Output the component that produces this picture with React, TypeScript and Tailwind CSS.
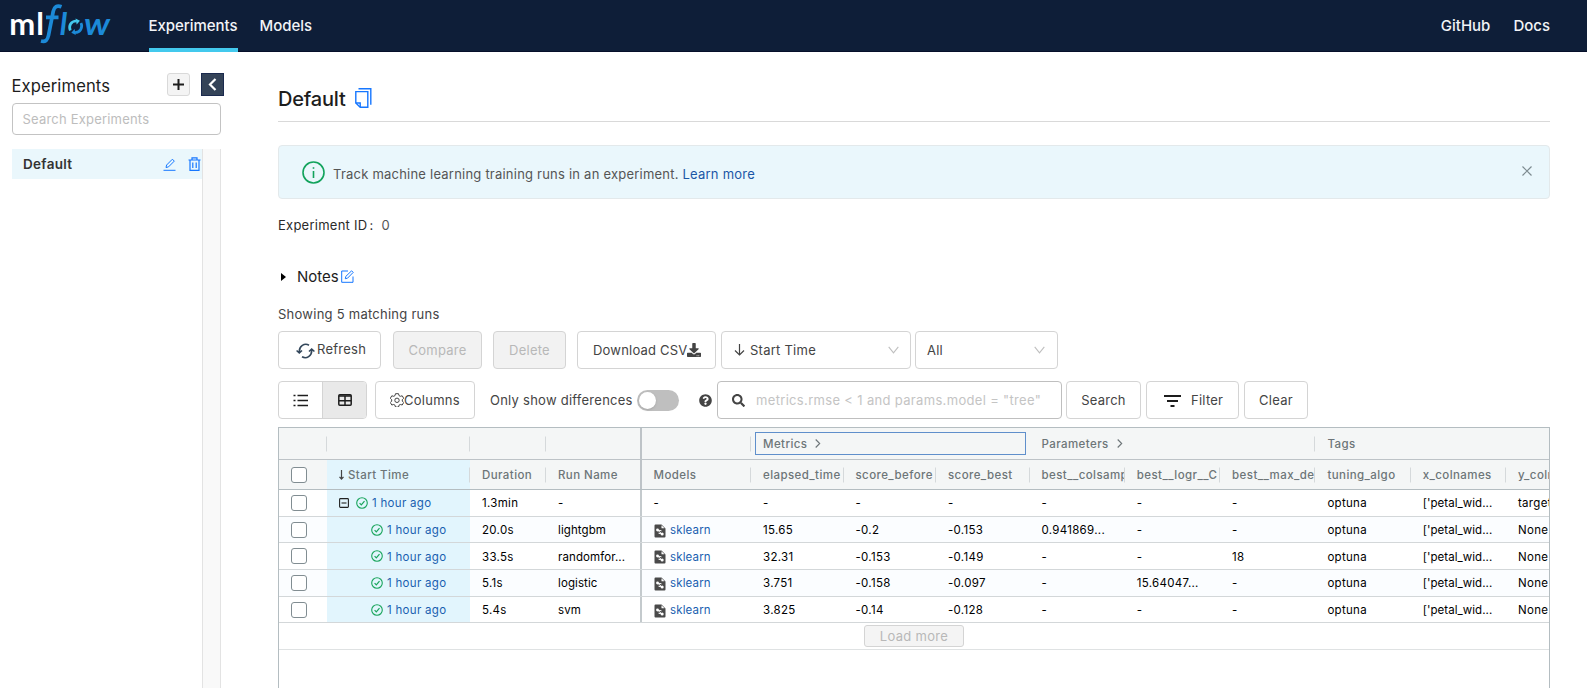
import React from 'react';
import { FaDownload, FaQuestionCircle, FaSearch } from 'react-icons/fa';

const COLS = 'grid-cols-[48px_143px_76px_95.5px_109.5px_92.5px_92.5px_93.5px_95.3px_95.3px_95.3px_95.3px_95.3px_95.3px]';

const headers = [
  'Duration',
  'Run Name',
  'Models',
  'elapsed_time',
  'score_before',
  'score_best',
  'best__colsamp',
  'best__logr__C',
  'best__max_de',
  'tuning_algo',
  'x_colnames',
  'y_coln',
];

interface Run {
  parent?: boolean;
  duration: string;
  name: string;
  model: string;
  values: string[];
}

const runs: Run[] = [
  { parent: true, duration: '1.3min', name: '-', model: '-', values: ['-', '-', '-', '-', '-', '-', 'optuna', "['petal_wid...", 'target'] },
  { duration: '20.0s', name: 'lightgbm', model: 'sklearn', values: ['15.65', '-0.2', '-0.153', '0.941869...', '-', '-', 'optuna', "['petal_wid...", 'None'] },
  { duration: '33.5s', name: 'randomfor...', model: 'sklearn', values: ['32.31', '-0.153', '-0.149', '-', '-', '18', 'optuna', "['petal_wid...", 'None'] },
  { duration: '5.1s', name: 'logistic', model: 'sklearn', values: ['3.751', '-0.158', '-0.097', '-', '15.64047...', '-', 'optuna', "['petal_wid...", 'None'] },
  { duration: '5.4s', name: 'svm', model: 'sklearn', values: ['3.825', '-0.14', '-0.128', '-', '-', '-', 'optuna', "['petal_wid...", 'None'] },
];

const Logo = () => (
  <svg width="112" height="50" viewBox="0 0 112 50" className="shrink-0 font-['Lato',sans-serif]">
    <text x="9.3" y="34.5" fontSize="31" fontWeight="700" fill="#fff">m</text>
    <text x="36.3" y="34.5" fontSize="31" fontWeight="700" fill="#fff">l</text>
    <path d="M61.500 6.800c-4.500-1.800-7.300 0-8.300 4.700L48.500 35.500c-1 4.700-3 6.700-7.500 5.500M46 17.300h12.500" fill="none" stroke="#1c8ad8" strokeWidth="3.700" />
    <text x="59.8" y="34.5" fontSize="31" fontWeight="700" fontStyle="italic" fill="#1c8ad8">l</text>
    <g fill="none" strokeWidth="2.700">
      <path d="M70.300 30.500c-2-4.500 .7-9.500 6-9.500" stroke="#43c9ed" />
      <path d="M81 23c2 4.500-.7 9.500-6 9.500" stroke="#1c8ad8" />
    </g>
    <path d="M75.500 18.500l4.500 2.300-3.300 3.700z" fill="#43c9ed" />
    <path d="M75.800 35l-4.500-2.300 3.300-3.700z" fill="#1c8ad8" />
    <text x="84" y="34.5" fontSize="31" fontWeight="700" fontStyle="italic" fill="#1c8ad8" textLength="26" lengthAdjust="spacingAndGlyphs">w</text>
  </svg>
);

const CheckCircle = () => (
  <svg width="12" height="12" viewBox="0 0 12 12" fill="none" stroke="#1aa55c" className="shrink-0">
    <circle cx="6" cy="6" r="5.300" strokeWidth="1.100" />
    <path d="M3.600 6.200l1.700 1.700 3.200-3.800" strokeWidth="1.200" />
  </svg>
);

const ModelIcon = () => (
  <svg width="12" height="14" viewBox="0 0 12 14" className="ml-[0.5px] shrink-0">
    <path d="M1.500 .5h6l4 4v8a1 1 0 0 1-1 1h-9a1 1 0 0 1-1-1v-11a1 1 0 0 1 1-1z" fill="#4a4a4a" />
    <path d="M7.500 1.300v3h3z" fill="#fff" />
    <path d="M3.500 6L8 10M3.500 6l4 .8M8 10l-3.500-.8" stroke="#fff" />
    <circle cx="3.500" cy="6" r="1.400" fill="#fff" />
    <circle cx="8.200" cy="10" r="1.500" fill="#fff" />
  </svg>
);

const Checkbox = () => <span className="block h-4 w-4 rounded-[3px] border-[1.5px] border-[#818d92] bg-white" />;

const Chevron = () => (
  <svg width="11" height="8" viewBox="0 0 11 8" fill="none" stroke="#bfbfbf" strokeWidth="1.100">
    <path d="M.7 .8l4.800 6 4.800-6" />
  </svg>
);

const GroupArrow = () => (
  <svg width="6" height="9" viewBox="0 0 6 9" fill="none" stroke="#6d7578" strokeWidth="1.100" className="mb-[2px] ml-[8px]">
    <path d="M.7 .5l4 4-4 4" />
  </svg>
);

const Tick = () => <span className="absolute right-0 top-1/2 h-[15px] w-px -translate-y-1/2 bg-[#d5d9db]" />;

const btn = 'flex h-[38px] shrink-0 items-center whitespace-nowrap rounded border border-[#d4d4d4] bg-white text-[13px] tracking-[0.25px] text-[#444]';

function Sidebar() {
  return (
    <aside className="flex w-[224px] shrink-0 flex-col pl-[11.5px]">
      <div className="mt-[21px] flex h-[23px] items-center">
        <span className="w-[155.5px] pt-[3px] text-[16.6px] tracking-[0.1px] text-[#1d1d1d]">Experiments</span>
        <button className="flex h-[23px] w-[23px] items-center justify-center rounded-[3px] border border-[#d9d9d9] bg-[#f4f4f4]">
          <svg width="11" height="11" viewBox="0 0 11 11" stroke="#1d1d1d" strokeWidth="2"><path d="M5.500 0v11M0 5.500h11" /></svg>
        </button>
        <button className="ml-auto flex h-[23px] w-[23px] items-center justify-center border border-[#1b2a4e] bg-[#344358]">
          <svg width="9" height="13" viewBox="0 0 9 13" fill="none" stroke="#fff" strokeWidth="2.200"><path d="M7.500 1L2 6.500 7.500 12" /></svg>
        </button>
      </div>
      <div className="mt-[7px] flex h-[32px] w-[209.500px] items-center rounded border border-[#c3c3c3] px-[10px] pt-[2px] text-[13px] tracking-[0.2px] text-[#bdbdbd]">
        Search Experiments
      </div>
      <div className="mt-[14px] flex w-[209.500px] flex-1">
        <div className="flex-1">
          <div className="flex h-[30px] items-center bg-[#eaf7fc] pl-[11.500px]">
            <span className="pt-px text-[13.5px] font-semibold tracking-[0.3px] text-[#333]">Default</span>
            <svg width="13" height="13" viewBox="0 0 13 13" fill="none" stroke="#1677ff" className="ml-auto">
              <path d="M.5 12.300h12M3 9.500l.6-2.500L9.400 1.200l1.900 1.900L5.500 8.900z" />
            </svg>
            <svg width="13" height="14" viewBox="0 0 13 14" fill="none" stroke="#1677ff" strokeWidth="1.200" className="ml-3 mr-px">
              <path d="M.5 3h12M4 3V.8h5V3M2 3v10.300h9V3M4.800 5.500v5.500M8.200 5.500v5.500" />
            </svg>
          </div>
        </div>
        <div className="w-[19px] border-x border-[#e3e3e3] bg-[#f9f9f9]" />
      </div>
    </aside>
  );
}

function Toolbar() {
  return (
    <>
      <div className="mt-[6px] flex">
        <button className={`${btn} w-[103px] pl-[17px]`}>
          <svg width="19" height="16" viewBox="0 0 19 16" fill="none" stroke="#33475b" strokeWidth="1.600" className="mt-px">
            <path d="M13 2.200C8.500-.3 3 3 3.300 9M.6 7.500l2.700 2.500 2.700-2.500" />
            <path d="M6 13.800c4.500 2.500 10-.8 9.700-6.800M18.400 8.500L15.700 6 13 8.500" />
          </svg>
          <span className="ml-[2px]">Refresh</span>
        </button>
        <button className={`${btn} ml-3 w-[89px] justify-center bg-[#f2f2f2]! pt-[2px] text-[#b8b8b8]!`}>Compare</button>
        <button className={`${btn} ml-[11px] w-[73px] justify-center bg-[#f2f2f2]! pt-[2px] text-[#b8b8b8]!`}>Delete</button>
        <button className={`${btn} ml-[11px] w-[139px] pl-[15px] pt-[2px]`}>
          <span className="tracking-[0.2px]">Download CSV</span><FaDownload size={14} className="mb-[2px]" />
        </button>
        <div className={`${btn} ml-[5px] w-[190px] pl-3 pr-[11px]`}>
          <svg width="11" height="12" viewBox="0 0 11 12" fill="none" stroke="#444" strokeWidth="1.200"><path d="M5.500 0v11M1 6.500L5.500 11 10 6.500" /></svg>
          <span className="ml-[5px] mr-auto pt-[2px]">Start Time</span>
          <Chevron />
        </div>
        <div className={`${btn} ml-[4px] w-[143px] justify-between pl-[11px] pr-3`}><span className="pt-[2px]">All</span><Chevron /></div>
      </div>

      <div className="mt-[12px] flex items-center">
        <div className={`${btn} w-[89px] overflow-hidden`}>
          <span className="flex h-full w-[43px] items-center justify-center">
            <svg width="15" height="13" viewBox="0 0 15 13" stroke="#1d1d1d" strokeWidth="1.500">
              <path d="M4.500 1.500H15M4.500 6.500H15M4.500 11.500H15M.5 1.500h2M.5 6.500h2M.5 11.500h2" />
            </svg>
          </span>
          <span className="flex h-full flex-1 items-center justify-center border-l border-[#d4d4d4] bg-[#e9e9e9]">
            <svg width="14" height="12" viewBox="0 0 14 12" fill="none" stroke="#1d1d1d" strokeWidth="1.500">
              <rect x=".8" y=".8" width="12.400" height="10.400" rx="1" />
              <path d="M1 2h12M1 6.800h12M7 2v9" />
            </svg>
          </span>
        </div>
        <button className={`${btn} ml-[8px] w-[100px] pl-[14px]`}>
          <svg width="14" height="14" viewBox="0 0 14 14" fill="none" stroke="#444" strokeWidth="1">
            <path d="M5.500 .7h3l.5 1.900 1.300.7 1.900-.5 1.500 2.500-1.400 1.400v1.400l1.400 1.400-1.500 2.500-1.900-.5-1.300.7-.5 1.900h-3L5 12.200l-1.300-.7-1.900.5L.3 9.500l1.400-1.400V6.700L.3 5.300l1.500-2.500 1.900.5L5 2.600z" />
            <circle cx="7" cy="7.300" r="2.200" />
          </svg>
          <span className="pt-px">Columns</span>
        </button>
        <span className="ml-[15px] w-[147px] shrink-0 whitespace-nowrap pt-px text-[13px] tracking-[0.25px] text-[#444]">Only show differences</span>
        <span className="flex h-[21px] w-[42px] shrink-0 items-center rounded-full bg-[#bfbfbf] px-[2px]">
          <span className="h-[17px] w-[17px] rounded-full bg-white shadow" />
        </span>
        <FaQuestionCircle size={13} className="ml-[20px] shrink-0 text-[#444]" />
        <div className={`${btn} ml-[5px] w-[345px] border-[#bfbfbf]! pl-[14px]`}>
          <FaSearch size={13} />
          <span className="ml-[11px] pt-px tracking-[0.33px] text-[#c4c4c4]">metrics.rmse &lt; 1 and params.model = "tree"</span>
        </div>
        <button className={`${btn} ml-[4px] w-[75px] justify-center pt-px`}>Search</button>
        <button className={`${btn} ml-[5px] w-[93px] pl-[17px] pt-px`}>
          <svg width="17" height="12" viewBox="0 0 17 12" stroke="#1d1d1d" strokeWidth="1.800"><path d="M0 1h17M3 6h11M6.500 11h4" /></svg>
          <span className="ml-[10px]">Filter</span>
        </button>
        <button className={`${btn} ml-[5px] w-[64px] justify-center pt-px`}>Clear</button>
      </div>
    </>
  );
}

function RunsTable() {
  return (
    <div className="mt-2 flex-1 overflow-hidden border border-b-0 border-[#b4bdc1] text-[11.5px]">
      <div className={`grid ${COLS} h-[32px] items-center border-b border-[#bdc3c7] bg-[#f4f6f6] font-medium tracking-[0.42px] text-[#6d7578]`}>
        <div className="relative h-full"><Tick /></div>
        <div className="relative h-full"><Tick /></div>
        <div className="relative h-full"><Tick /></div>
        <div className="h-full border-r-2 border-[#bdc3c7]" />
        <div className="relative h-full"><Tick /></div>
        <div className="col-span-3 ml-1 mr-[4px] flex h-[23px] items-center border border-[#5f8fcb] pl-[7px] pt-[2px]">
          Metrics
          <GroupArrow />
        </div>
        <div className="relative col-span-3 flex h-full items-center pl-3 pt-[2px]">
          Parameters
          <GroupArrow />
          <Tick />
        </div>
        <div className="col-span-3 pl-3 pt-[2px]">Tags</div>
      </div>

      <div className={`grid ${COLS} h-[30px] items-center border-b border-[#b4bdc1] bg-[#f4f6f6] font-medium tracking-[0.42px] text-[#6d7578]`}>
        <div className="relative flex h-full items-center pl-3"><Checkbox /></div>
        <div className="relative flex h-full items-center bg-[#e2f5fd] pl-3 pt-[2px]">
          <svg width="5" height="10" viewBox="0 0 5 10" fill="none" stroke="#444" strokeWidth="1.200" className="mb-px mr-1"><path d="M2.500 0v9M.5 6.800l2 2.200 2-2.200" /></svg>
          Start Time
          <Tick />
        </div>
        {headers.map((label, i) => (
          <div key={label} className={`relative flex h-full items-center overflow-hidden pl-3 pt-[2px] ${i === 1 ? 'border-r-2 border-[#bdc3c7]' : ''}`}>
            {label}
            {i !== 1 && <Tick />}
          </div>
        ))}
      </div>

      {runs.map((run, i) => (
        <div key={i} className={`grid ${COLS} h-[26.700px] items-center border-b border-[#d3d7d9] tracking-[0.3px] text-black ${i % 2 ? 'bg-[#fbfdff]' : 'bg-white'}`}>
          <div className="pl-3"><Checkbox /></div>
          <div className={`flex h-full items-center bg-[#e2f5fd] ${run.parent ? 'pl-3' : 'pl-[44px]'}`}>
            {run.parent && (
              <svg width="10" height="10" viewBox="0 0 10 10" fill="none" stroke="#222" strokeWidth="1.100" className="mr-[7px]"><rect x=".6" y=".6" width="8.800" height="8.800" rx=".8" /><path d="M2.500 5h5" /></svg>
            )}
            <CheckCircle />
            <a className="ml-1 pt-[2px] text-[#1a5fb0]">1 hour ago</a>
          </div>
          <div className="pl-3 pt-[2px]">{run.duration}</div>
          <div className="flex h-full items-center border-r-2 border-[#c4cacd] pl-3 pt-[2px] tracking-[0.1px]">{run.name}</div>
          <div className="flex h-full items-center pl-3 pt-[2px]">
            {run.model === '-' ? '-' : <><ModelIcon /><a className="ml-1 tracking-[0.15px] text-[#1a5fb0]">{run.model}</a></>}
          </div>
          {run.values.map((v, j) => (
            <div key={j} className={`overflow-hidden whitespace-nowrap pl-3 pt-[2px] ${j === 7 ? 'tracking-[0.05px]' : ''}`}>{v}</div>
          ))}
        </div>
      ))}

      <div className="flex h-[26.500px] items-center justify-center border-b border-[#dfe2e3]">
        <button className="h-[22px] w-[100px] rounded-[3px] border border-[#d4d4d4] bg-[#f4f4f4] text-[13px] leading-none tracking-[0.3px] text-[#b8b8b8]">Load more</button>
      </div>
    </div>
  );
}

export default function App() {
  return (
    <div className="flex h-[688px] w-[1587px] flex-col overflow-hidden bg-white font-['Inter',sans-serif]">
      <header className="flex h-[52px] shrink-0 border-b border-[#06102a] bg-[#0e1e38] text-[15px] font-medium text-[#f2f4f7]">
        <Logo />
        <nav className="ml-[36.500px] flex h-[52px]">
          <a className="flex w-[89px] items-center justify-center border-b-4 border-[#43c9ed] pt-[5px] tracking-[-0.05px]">Experiments</a>
          <a className="ml-[22px] flex items-center pt-px">Models</a>
        </nav>
        <nav className="ml-auto mr-[37px] flex items-center gap-[23px] pt-px">
          <a>GitHub</a>
          <a>Docs</a>
        </nav>
      </header>

      <div className="flex min-h-0 flex-1">
        <Sidebar />
        <main className="ml-[54px] flex w-[1272px] flex-col">
          <div className="flex h-[70px] items-center border-b border-[#d9d9d9] pt-[23px]">
            <h1 className="pt-px text-[20px] font-medium tracking-[-0.2px] text-[#1d1d1d]">Default</h1>
            <svg width="17" height="20" viewBox="0 0 17 20" fill="none" stroke="#1677ff" strokeWidth="1.400" className="ml-[9px]">
              <path d="M3.500 .8h12.300v16M.8 3.600h12v15.600H5.200L.8 15z" />
              <path d="M.8 15h4.400v4" />
            </svg>
          </div>

          <div className="mt-[23px] flex h-[54px] shrink-0 items-center rounded border border-[#e3e9eb] bg-[#eaf7fc] pl-[23px] text-[13px] tracking-[0.22px] text-[#555]">
            <svg width="23" height="23" viewBox="0 0 23 23" fill="none" stroke="#12a35c" strokeWidth="1.600" className="mt-px">
              <circle cx="11.500" cy="11.500" r="10.500" />
              <path d="M11.500 10v7M11.500 6.200v1.600" />
            </svg>
            <span className="ml-2 mt-[5px]">Track machine learning training runs in an experiment. <a className="text-[#1a56a6]">Learn more</a></span>
            <svg width="10" height="10" viewBox="0 0 10 10" stroke="#7d8b90" strokeWidth="1.200" className="mb-[3px] ml-auto mr-[17px]"><path d="M.5 .5l9 9M9.500 .5l-9 9" /></svg>
          </div>

          <div className="mt-[17px] flex h-5 items-center text-[13px] tracking-[0.25px] text-[#2b2b2b]">Experiment ID<span className="ml-[2px]">:</span><span className="ml-2 text-[#555]">0</span></div>

          <div className="mt-[31px] flex h-5 items-center text-[15px] text-[#1d1d1d]">
            <span className="ml-[3px] border-y-[4px] border-l-[5px] border-y-transparent border-l-black" />
            <span className="ml-[11px]">Notes</span>
            <svg width="13" height="13" viewBox="0 0 13 13" fill="none" stroke="#1677ff" className="mb-px ml-[2px]">
              <path d="M7 1H.7v11.300H12V6.500M4.300 8.700l.5-2.300L10.600.8l1.600 1.600-5.700 5.800z" />
            </svg>
          </div>

          <div className="mt-[18px] flex h-5 items-center text-[13px] tracking-[0.25px] text-[#444]">Showing 5 matching runs</div>
          <Toolbar />
          <RunsTable />
        </main>
      </div>
    </div>
  );
}
